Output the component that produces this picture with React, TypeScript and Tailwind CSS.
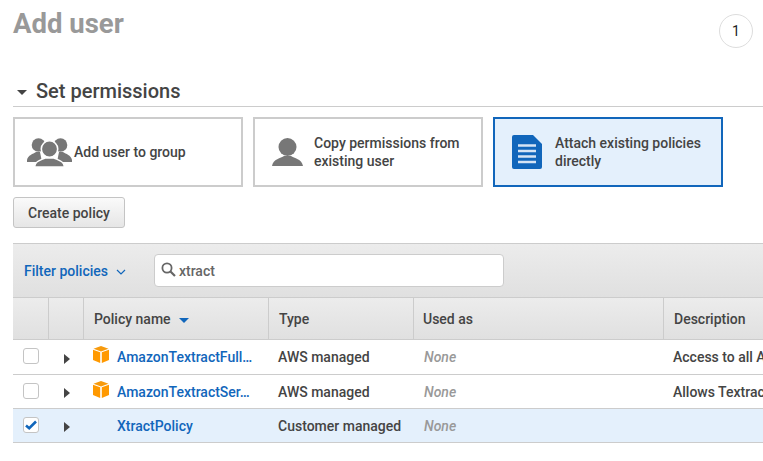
import React from "react";

const font = { fontFamily: "Roboto, sans-serif" };

function Box() {
  return (
    <svg width="16" height="17" viewBox="0 0 16 17" className="shrink-0">
      <path d="M8 0 L15.5 2.8 L8 5.4 L0.5 2.8 Z" fill="#f79a0c" />
      <path d="M0 3.8 L7.2 6.3 V17 L0 14 Z" fill="#ff9900" />
      <path d="M16 3.8 L8.8 6.3 V17 L16 14 Z" fill="#ff9900" />
    </svg>
  );
}

function Tri() {
  return (
    <svg width="6" height="10" viewBox="0 0 6 10" className="shrink-0">
      <path d="M0 0 L6 5 L0 10 Z" fill="#444" />
    </svg>
  );
}

function Check({ on }: { on?: boolean }) {
  return (
    <div className="w-[16px] h-[16px] rounded-[3px] border border-[#c4c4c4] bg-white flex items-center justify-center">
      {on && (
        <svg width="12" height="10" viewBox="0 0 12 10">
          <path d="M1 5.5 L4.2 8.2 L11 1.5" fill="none" stroke="#1166bb" strokeWidth="2.6" />
        </svg>
      )}
    </div>
  );
}

function Row({ name, type, desc, icon, selected, h, tri }: { name: string; type: string; desc: string; icon?: boolean; selected?: boolean; h: string; tri: string }) {
  return (
    <div className={`flex border-b border-[#ccc] text-[14px] font-medium text-[#444] ${h} ${selected ? "bg-[#e4f0fc]" : "bg-white"}`}>
      <div className="w-[36px] shrink-0 pl-[10px] pt-[8px]"><Check on={selected} /></div>
      <div className={`w-[35px] shrink-0 pl-[15px] ${tri}`}><Tri /></div>
      <div className="w-[185px] shrink-0 flex pl-[9px]">
        <div className="w-[16px] shrink-0 pt-[6px]">{icon && <Box />}</div>
        <span className="pl-[8px] pt-[7px] text-[#1166bb] whitespace-nowrap">{name}</span>
      </div>
      <div className="w-[145px] shrink-0 pl-[9px] pt-[7px] whitespace-nowrap">{type}</div>
      <div className="w-[250px] shrink-0 pl-[10px] pt-[7px] italic text-[#999]">None</div>
      <div className="pl-[9px] pt-[7px] whitespace-nowrap">{desc}</div>
    </div>
  );
}

function HeadCell({ w, children, last, pl }: { w: string; children?: React.ReactNode; last?: boolean; pl?: string }) {
  return (
    <div className={`${w} shrink-0 h-full flex items-center pt-[2px] ${pl ?? "pl-[10px]"} ${last ? "" : "border-r border-[#ccc]"}`}>{children}</div>
  );
}

export default function App() {
  return (
    <div className="w-[763px] h-[461px] overflow-hidden bg-white pl-[13px]" style={font}>
      <div className="flex justify-between items-start h-[81px]">
        <h1 className="text-[27.5px] leading-[33px] pt-[7px] font-bold text-[#999] box-content">Add user</h1>
        <div className="mt-[14px] mr-[10px] w-[34px] h-[34px] pt-[1px] rounded-full border border-[#ddd] flex items-center justify-center text-[14px] text-[#222]">1</div>
      </div>
      <div className="flex items-start h-[26px] border-b border-[#ccc]">
        <svg width="10" height="5" viewBox="0 0 10 5" className="ml-[4px] mr-[9px] mt-[9px]"><path d="M0 0 H10 L5 5 Z" fill="#444" /></svg>
        <h2 className="text-[20px] font-medium text-[#444] leading-[21px]">Set permissions</h2>
      </div>
      <div className="flex gap-[10px] mt-[10px]">
        <div className="w-[230px] h-[70px] border-2 border-[#ccc] bg-white flex items-center pl-[12px] text-[14px] font-medium text-[#444]">
          <svg width="46" height="29" viewBox="0 0 46 29" className="shrink-0">
            <g fill="#777">
              <circle cx="11.5" cy="7" r="6.8" /><circle cx="33.5" cy="7" r="6.8" />
              <path d="M0 22 C1 17 6 16 9 14 L13 14 L15 24 L0 24 Z" />
              <path d="M45 22 C44 17 39 16 36 14 L32 14 L30 24 L45 24 Z" />
              <circle cx="22.5" cy="11" r="8.2" stroke="#fff" strokeWidth="1.6" />
              <path d="M7.5 29 C8 23 14 22 18 20 L27 20 C31 22 37 23 37.5 29 Z" stroke="#fff" strokeWidth="1.4" />
            </g>
          </svg>
          <span className="ml-[1px]">Add user to group</span>
        </div>
        <div className="w-[230px] h-[70px] border-2 border-[#ccc] bg-white flex items-center pl-[17px] text-[14px] leading-[18px] font-medium text-[#444]">
          <svg width="31" height="28" viewBox="0 0 31 28" className="shrink-0">
            <circle cx="15.5" cy="9" r="9" fill="#777" />
            <path d="M0 28 C1 21 9 20 12 18 H19 C22 20 30 21 31 28 Z" fill="#777" />
          </svg>
          <span className="ml-[11px]">Copy permissions from<br />existing user</span>
        </div>
        <div className="w-[230px] h-[70px] border-2 border-[#1166bb] bg-[#e4f0fc] flex items-center pl-[17px] text-[14px] leading-[18px] font-medium text-[#444]">
          <svg width="30" height="34" viewBox="0 0 30 34" className="shrink-0">
            <path d="M2 0 H21 L30 9 V32 A2 2 0 0 1 28 34 H2 A2 2 0 0 1 0 32 V2 A2 2 0 0 1 2 0 Z" fill="#1166bb" />
            <path d="M6 10.5 H24 M6 16 H24 M6 21.5 H24 M6 27 H24" stroke="#d5e4f5" strokeWidth="2.4" />
          </svg>
          <span className="ml-[13px]">Attach existing policies<br />directly</span>
        </div>
      </div>
      <button className="block mt-[10px] w-[112px] h-[31px] pt-[2px] rounded-[3px] border border-[#c4c4c4] bg-gradient-to-b from-[#fafafa] to-[#e6e6e6] text-[14px] font-medium text-[#444]">Create policy</button>
      <div className="mt-[15px] h-[54px] border-t border-[#ccc] bg-gradient-to-b from-[#ececec] to-[#e0e0e0] flex items-center">
        <span className="ml-[11px] pt-[2px] text-[14px] font-medium text-[#1166bb] whitespace-nowrap">Filter policies</span>
        <svg width="10" height="6" viewBox="0 0 10 6" className="ml-[8px] mt-[2px]"><path d="M1 1 L5 5 L9 1" fill="none" stroke="#1166bb" strokeWidth="1.2" /></svg>
        <div className="ml-[28px] w-[350px] h-[33px] rounded-[4px] border border-[#ccc] bg-white flex items-center pl-[6px]">
          <svg width="15" height="15" viewBox="0 0 15 15" className="shrink-0 -mt-[2px]"><circle cx="6" cy="6" r="4.6" fill="none" stroke="#666" strokeWidth="1.8" /><path d="M9.5 9.5 L14 14" stroke="#666" strokeWidth="2.2" /></svg>
          <span className="ml-[3px] pt-[2px] text-[14px] font-medium text-[#666]">xtract</span>
        </div>
      </div>
      <div className="flex h-[43px] border-t border-b border-[#ccc] bg-gradient-to-b from-[#ececec] to-[#e0e0e0] text-[14px] font-medium text-[#444]">
        <HeadCell w="w-[36px]" />
        <HeadCell w="w-[35px]" />
        <HeadCell w="w-[185px]">
          <span>Policy name</span>
          <svg width="10" height="5" viewBox="0 0 10 5" className="ml-[8px] mt-[1px]"><path d="M0 0 H10 L5 5 Z" fill="#1166bb" /></svg>
        </HeadCell>
        <HeadCell w="w-[145px]">Type</HeadCell>
        <HeadCell w="w-[250px]" pl="pl-[9px]">Used as</HeadCell>
        <HeadCell w="w-[100px]" last>Description</HeadCell>
      </div>
      <Row h="h-[35px]" tri="pt-[14px]" name="AmazonTextractFull…" type="AWS managed" desc="Access to all Amazon Textract APIs" icon />
      <Row h="h-[34px]" tri="pt-[13px]" name="AmazonTextractSer…" type="AWS managed" desc="Allows Textract to call services" icon />
      <Row h="h-[34px]" tri="pt-[13px]" name="XtractPolicy" type="Customer managed" desc="" selected />
    </div>
  );
}
